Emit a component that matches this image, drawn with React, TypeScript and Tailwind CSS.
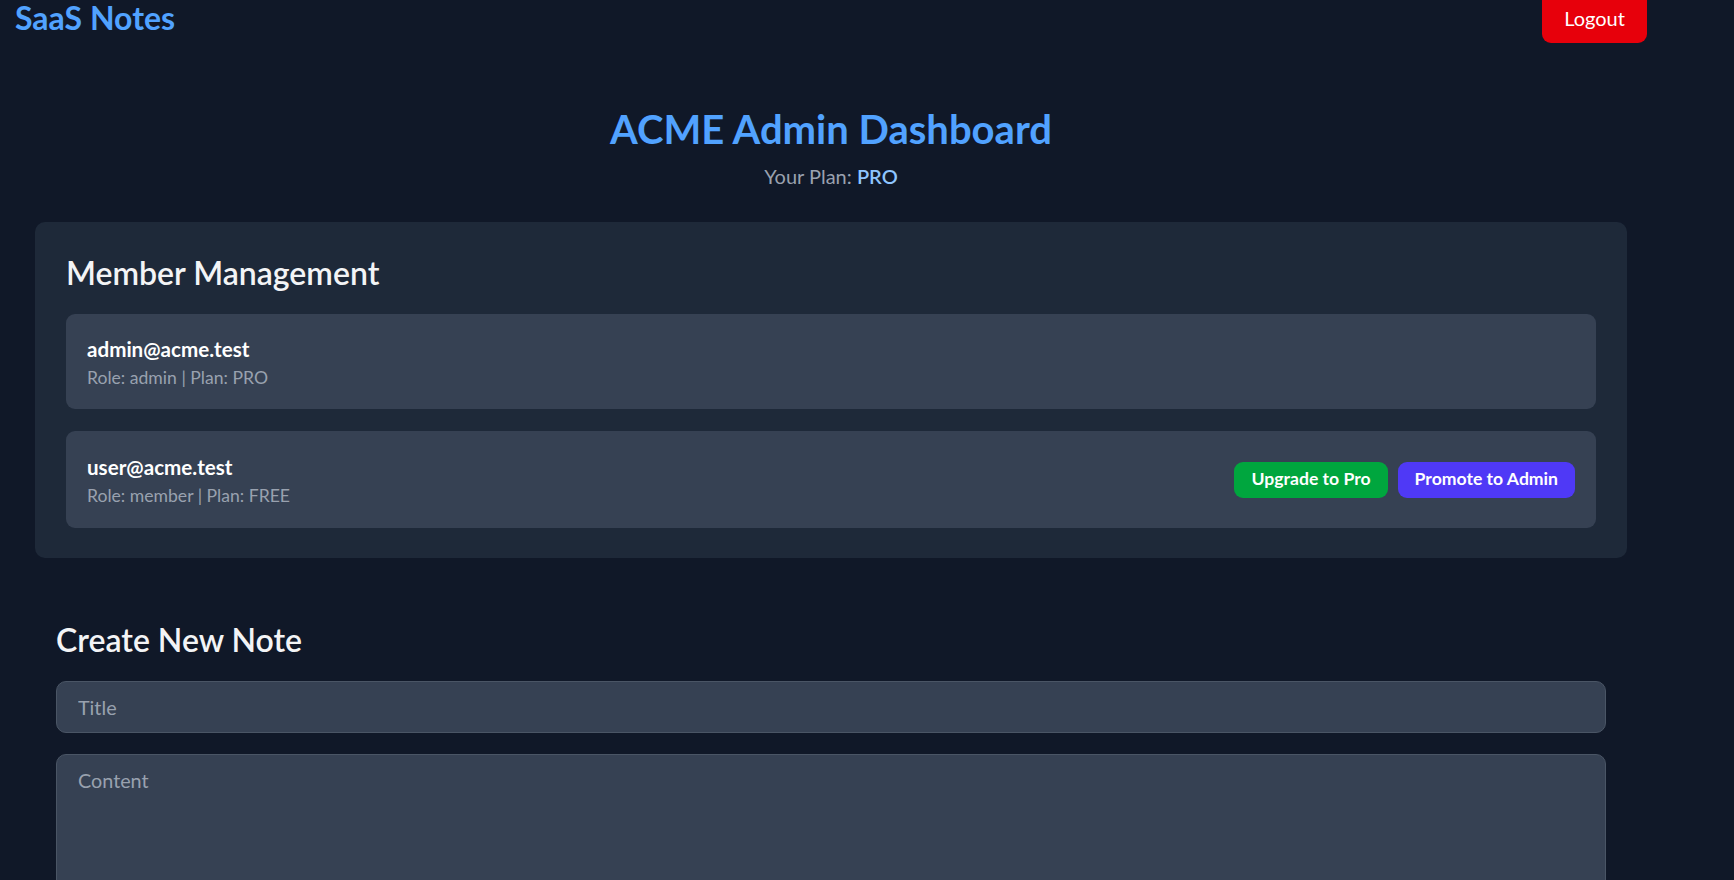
export default function App() {
  return (
    <div className="min-h-screen bg-[#101828] font-['Lato',sans-serif]">
      <div className="w-[1662px]">
        <header className="flex h-[32px] items-start justify-between px-[15px]">
          <h1 className="text-[32px] leading-[36px] font-bold text-[#51a2ff]">SaaS Notes</h1>
          <button className="-mt-[8px] h-[51px] w-[105px] shrink-0 rounded-[9px] bg-[#e7000b] text-[20px] text-white">
            Logout
          </button>
        </header>

        <h2 className="mt-[73px] text-center text-[40px] leading-[48px] font-bold text-[#51a2ff]">
          ACME Admin Dashboard
        </h2>
        <p className="mt-[9px] text-center text-[20px] leading-[28px] text-[#99a1af]">
          Your Plan: <span className="font-semibold text-[#8ec5ff]">PRO</span>
        </p>

        <main className="mt-[32px] px-[35px]">
          <section className="rounded-[10px] bg-[#1e2939] px-[31px] pt-[31px] pb-[30px]">
            <h3 className="text-[32px] leading-[40px] font-semibold text-[#f3f4f6]">Member Management</h3>
            <div className="mt-[21px] flex flex-col gap-[22px]">
              <div className="flex h-[95px] items-center justify-between rounded-[9px] bg-[#364153] px-[21px]">
                <div className="pt-[3px]">
                  <p className="text-[20.6px] leading-[28px] font-bold text-white">admin@acme.test</p>
                  <p className="mt-[2px] text-[17.6px] leading-[26px] text-[#99a1af]">Role: admin | Plan: PRO</p>
                </div>
              </div>
              <div className="flex h-[97px] items-center justify-between rounded-[9px] bg-[#364153] px-[21px]">
                <div className="pt-[3px]">
                  <p className="text-[20.6px] leading-[28px] font-bold text-white">user@acme.test</p>
                  <p className="mt-[2px] text-[17.6px] leading-[26px] text-[#99a1af]">Role: member | Plan: FREE</p>
                </div>
                <div className="flex gap-[10px]">
                  <button className="h-[36px] rounded-[9px] bg-[#00a63e] px-[17px] text-[17.6px] font-bold text-white">
                    Upgrade to Pro
                  </button>
                  <button className="h-[36px] rounded-[9px] bg-[#4f39f6] px-[17px] text-[17.6px] font-bold text-white">
                    Promote to Admin
                  </button>
                </div>
              </div>
            </div>
          </section>

          <section className="mt-[62px] px-[21px]">
            <h3 className="text-[32px] leading-[40px] font-semibold text-[#f3f4f6]">Create New Note</h3>
            <input
              type="text"
              placeholder="Title"
              className="mt-[21px] block h-[52px] w-full rounded-[10px] border border-[#4a5565] bg-[#364153] px-[21px] text-[19.8px] text-white placeholder:text-[#99a1af] focus:outline-none"
            />
            <textarea
              placeholder="Content"
              className="mt-[21px] block h-[200px] w-full resize-none rounded-[10px] border border-[#4a5565] bg-[#364153] px-[21px] pt-[11px] text-[19.8px] leading-[28px] text-white placeholder:text-[#99a1af] focus:outline-none"
            />
          </section>
        </main>
      </div>
    </div>
  );
}
